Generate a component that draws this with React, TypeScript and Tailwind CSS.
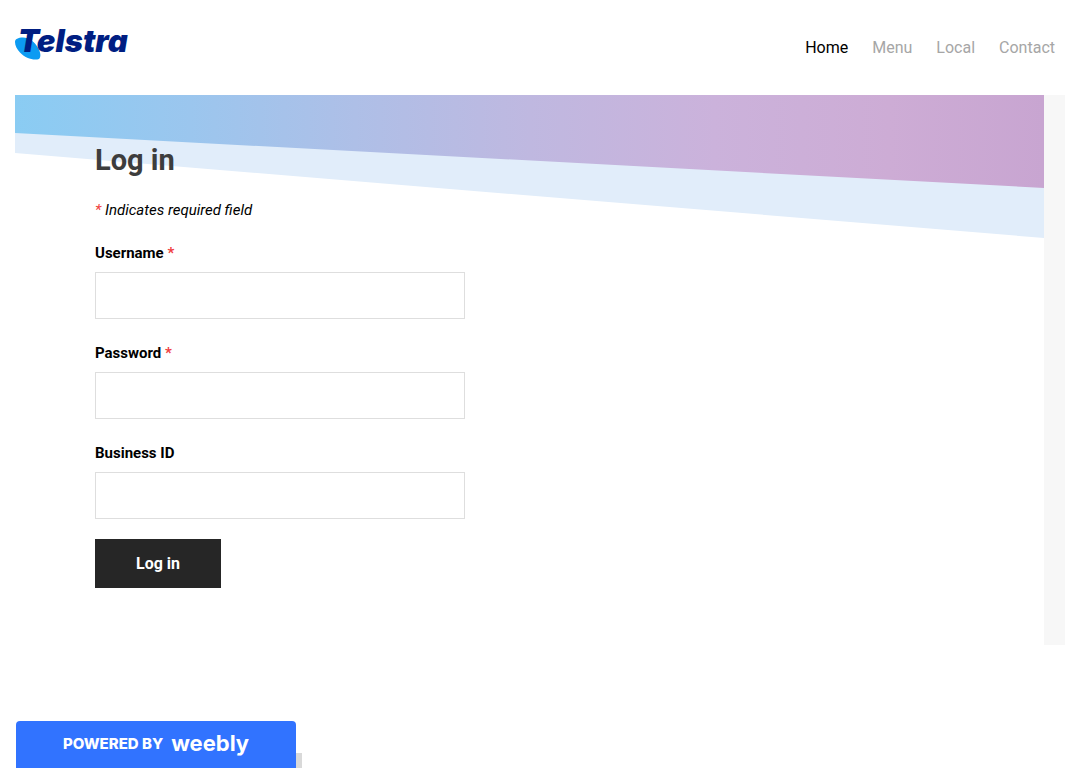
import React, { useState } from "react";
import clsx from "clsx";

const navItems = ["Home", "Menu", "Local", "Contact"];

const fields = [
  { id: "username", label: "Username", type: "text", required: true },
  { id: "password", label: "Password", type: "password", required: true },
  { id: "business-id", label: "Business ID", type: "text", required: false },
];

const Logo: React.FC = () => (
  <svg width="124" height="46" viewBox="0 0 124 46" role="img" aria-label="Telstra">
    <path
      d="M0 19C0 16 3 14.500 8 14.500C14 14.500 20 19 23 25C26 30 26 34 24 36C19 38 10 35 5 29.500C2 26 0 23 0 19Z"
      fill="#0c9bf2"
    />
    <text
      x="3"
      y="29"
      fill="#001e82"
      className="font-['Inter',sans-serif] text-[31px] font-black italic"
    >
      Telstra
    </text>
  </svg>
);

const HeroBackground: React.FC = () => (
  <svg
    className="absolute inset-x-0 top-0 h-[143px] w-full"
    viewBox="0 0 1029 143"
    preserveAspectRatio="none"
    aria-hidden="true"
  >
    <defs>
      <linearGradient id="sweep" x1="0" x2="1" y1="0" y2="0">
        <stop offset="0" stopColor="#8accf3" />
        <stop offset="0.17" stopColor="#9bc6ee" />
        <stop offset="0.33" stopColor="#aebfe7" />
        <stop offset="0.5" stopColor="#bfb8e0" />
        <stop offset="0.68" stopColor="#cbb2db" />
        <stop offset="0.85" stopColor="#cdacd5" />
        <stop offset="1" stopColor="#c8a5d1" />
      </linearGradient>
    </defs>
    <path d="M0 0H1029V143L0 58Z" fill="#e1edfa" />
    <path d="M0 0H1029V93L0 38Z" fill="url(#sweep)" />
  </svg>
);

const LoginForm: React.FC = () => {
  const [values, setValues] = useState<Record<string, string>>({});

  return (
    <form
      className="relative flex max-w-[450px] flex-col items-start pt-[47px] pb-14 pl-20"
      onSubmit={(e) => e.preventDefault()}
    >
      <h1 className="text-[29px] leading-9 font-bold text-[#3d3d3d]">Log in</h1>
      <p className="mt-[22px] text-[15px] leading-5 text-black italic">
        <span className="text-[#f04040]">*</span> Indicates required field
      </p>
      {fields.map((field) => (
        <div key={field.id} className="mt-[21px] mb-px w-full">
          <label htmlFor={field.id} className="block text-[15px] leading-6 font-bold text-black">
            {field.label}
            {field.required && <span className="text-[#f04040]"> *</span>}
          </label>
          <input
            id={field.id}
            type={field.type}
            required={field.required}
            className="mt-[7px] block h-[47px] w-full border border-[#dedede] bg-white px-4 text-[15px] outline-none focus:border-[#262626]"
            value={values[field.id] ?? ""}
            onChange={(e) => setValues({ ...values, [field.id]: e.target.value })}
          />
        </div>
      ))}
      <button
        type="submit"
        className="mt-[19px] h-[49px] border border-[#262626] bg-[#262626] px-10 text-[16px] font-bold text-white hover:bg-black"
      >
        Log in
      </button>
    </form>
  );
};

const App: React.FC = () => {
  return (
    <div className="min-h-screen bg-white font-['Roboto',sans-serif]">
      <header className="flex h-[95px] items-center justify-between px-[15px]">
        <a href="#" className="mb-1">
          <Logo />
        </a>
        <nav className="flex gap-6 pr-[10px]">
          {navItems.map((item) => (
            <a
              key={item}
              href="#"
              className={clsx(
                "text-[16px] leading-6 hover:text-black",
                item === "Home" ? "text-black" : "text-[#a6a6a6]"
              )}
            >
              {item}
            </a>
          ))}
        </nav>
      </header>

      <main className="mx-[15px] flex min-h-[550px] bg-[#f7f7f7] pr-[21px]">
        <div className="relative flex-1 bg-white">
          <HeroBackground />
          <LoginForm />
        </div>
      </main>

      <footer className="fixed bottom-0 left-4 flex items-end">
        <a
          href="#"
          className="flex h-[47px] w-[280px] items-center justify-center gap-2 rounded-t bg-[#3173ff] text-white"
        >
          <span className="font-['Inter',sans-serif] text-[15px] font-extrabold">POWERED BY</span>
          <span className="mb-1 font-['Inter',sans-serif] text-[22px] leading-7 font-bold">weebly</span>
        </a>
        <span className="h-[15px] w-[6px] bg-[#d9d9d9]" />
      </footer>
    </div>
  );
};

export default App;
